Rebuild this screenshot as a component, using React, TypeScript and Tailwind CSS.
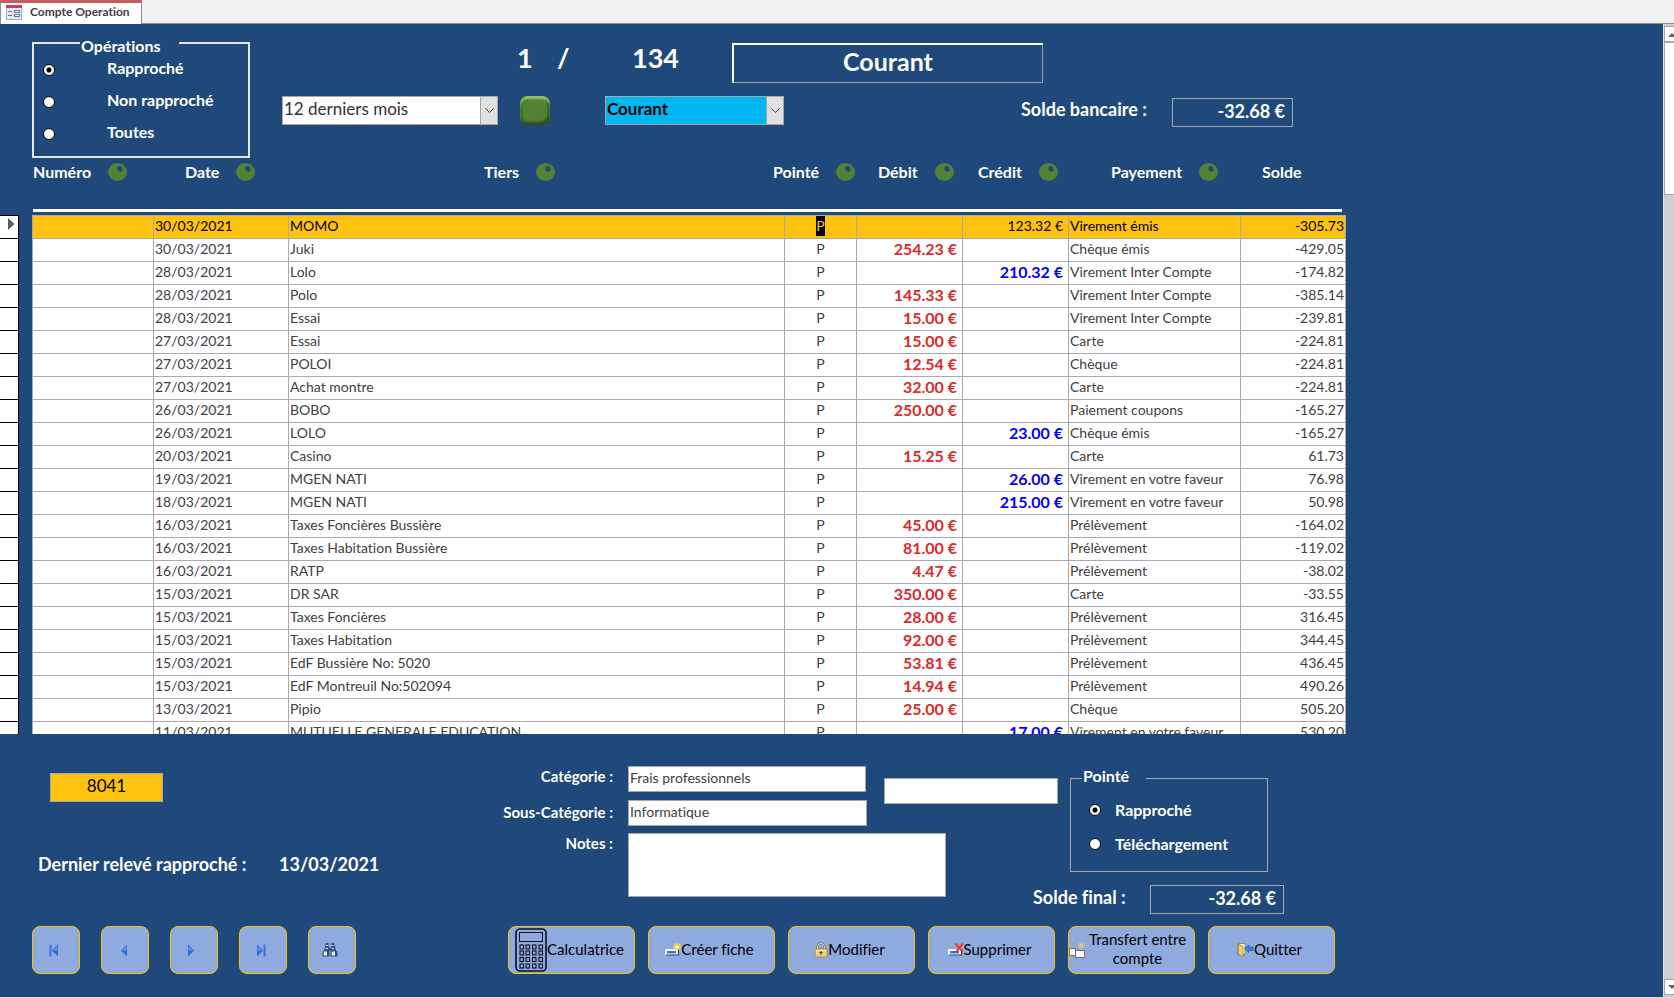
import type { ReactNode } from "react";

type Operation = {
  date: string;
  tiers: string;
  debit?: string;
  credit?: string;
  payement: string;
  solde: string;
};

const operations: Operation[] = [
  { date: "30/03/2021", tiers: "MOMO", credit: "123.32 €", payement: "Virement émis", solde: "-305.73" },
  { date: "30/03/2021", tiers: "Juki", debit: "254.23 €", payement: "Chèque émis", solde: "-429.05" },
  { date: "28/03/2021", tiers: "Lolo", credit: "210.32 €", payement: "Virement Inter Compte", solde: "-174.82" },
  { date: "28/03/2021", tiers: "Polo", debit: "145.33 €", payement: "Virement Inter Compte", solde: "-385.14" },
  { date: "28/03/2021", tiers: "Essai", debit: "15.00 €", payement: "Virement Inter Compte", solde: "-239.81" },
  { date: "27/03/2021", tiers: "Essai", debit: "15.00 €", payement: "Carte", solde: "-224.81" },
  { date: "27/03/2021", tiers: "POLOI", debit: "12.54 €", payement: "Chèque", solde: "-224.81" },
  { date: "27/03/2021", tiers: "Achat montre", debit: "32.00 €", payement: "Carte", solde: "-224.81" },
  { date: "26/03/2021", tiers: "BOBO", debit: "250.00 €", payement: "Paiement coupons", solde: "-165.27" },
  { date: "26/03/2021", tiers: "LOLO", credit: "23.00 €", payement: "Chèque émis", solde: "-165.27" },
  { date: "20/03/2021", tiers: "Casino", debit: "15.25 €", payement: "Carte", solde: "61.73" },
  { date: "19/03/2021", tiers: "MGEN NATI", credit: "26.00 €", payement: "Virement en votre faveur", solde: "76.98" },
  { date: "18/03/2021", tiers: "MGEN NATI", credit: "215.00 €", payement: "Virement en votre faveur", solde: "50.98" },
  { date: "16/03/2021", tiers: "Taxes Foncières Bussière", debit: "45.00 €", payement: "Prélèvement", solde: "-164.02" },
  { date: "16/03/2021", tiers: "Taxes Habitation Bussière", debit: "81.00 €", payement: "Prélèvement", solde: "-119.02" },
  { date: "16/03/2021", tiers: "RATP", debit: "4.47 €", payement: "Prélèvement", solde: "-38.02" },
  { date: "15/03/2021", tiers: "DR SAR", debit: "350.00 €", payement: "Carte", solde: "-33.55" },
  { date: "15/03/2021", tiers: "Taxes Foncières", debit: "28.00 €", payement: "Prélèvement", solde: "316.45" },
  { date: "15/03/2021", tiers: "Taxes Habitation", debit: "92.00 €", payement: "Prélèvement", solde: "344.45" },
  { date: "15/03/2021", tiers: "EdF Bussière No: 5020", debit: "53.81 €", payement: "Prélèvement", solde: "436.45" },
  { date: "15/03/2021", tiers: "EdF Montreuil No:502094", debit: "14.94 €", payement: "Prélèvement", solde: "490.26" },
  { date: "13/03/2021", tiers: "Pipio", debit: "25.00 €", payement: "Chèque", solde: "505.20" },
  { date: "11/03/2021", tiers: "MUTUELLE GENERALE EDUCATION", credit: "17.00 €", payement: "Virement en votre faveur", solde: "530.20" },
];

const sortLabels = ["Numéro", "Date", "Tiers", "Pointé", "Débit", "Crédit", "Payement"];

const FormIcon = () => (
  <svg width="16" height="15" viewBox="0 0 16 15" aria-hidden="true">
    <rect x="0.5" y="0.5" width="15" height="14" fill="#e4e9f5" stroke="#a3adc8" />
    <rect width="16" height="3" fill="#c9405c" />
    <path d="M2 6.500h4M2 10.500h4" stroke="#66739a" />
    <rect x="8.500" y="5.500" width="5" height="2" fill="#fff" stroke="#66739a" />
    <rect x="8.500" y="9.500" width="5" height="2" fill="#fff" stroke="#66739a" />
  </svg>
);

const CalculatorIcon = () => (
  <svg width="32" height="44" viewBox="0 0 32 44" fill="none" stroke="#0b1020" aria-hidden="true">
    <rect x="1" y="1" width="30" height="42" rx="4" strokeWidth="1.6" />
    <rect x="4.5" y="4.5" width="23" height="9" />
    {[17, 23, 29.5, 36].map((y) =>
      [5, 11, 17.5, 24].map((x) => <rect key={`${x}-${y}`} x={x} y={y} width="3.5" height="4" strokeWidth="1.1" />)
    )}
  </svg>
);

const RecordBar = () => (
  <>
    <rect x="0.5" y="7.5" width="12.500" height="5" fill="#fff" stroke="#f4f7ff" />
    <path d="M1 13h12.500V7" stroke="#27407c" strokeWidth="1.2" fill="none" />
    <rect x="2" y="9" width="9" height="2.5" fill="#3f74d8" />
  </>
);

const NewRecordIcon = () => (
  <svg width="16" height="16" viewBox="0 0 16 16" aria-hidden="true">
    <RecordBar />
    <path d="M12 1v8M8 5h8M9 2l6 6M15 2l-6 6" stroke="#f7d94c" strokeWidth="1.6" />
    <circle cx="12" cy="5" r="1.5" fill="#fff9c8" />
  </svg>
);

const DeleteRecordIcon = () => (
  <svg width="16" height="16" viewBox="0 0 16 16" aria-hidden="true">
    <RecordBar />
    <path d="M7.5 1.500l7.500 8.500M15 1.500L8 10" stroke="#f03a24" strokeWidth="2" />
  </svg>
);

const LockIcon = () => (
  <svg width="14" height="16" viewBox="0 0 14 16" aria-hidden="true">
    <path d="M3.500 8V5a3.500 3.500 0 0 1 7 0V8" fill="none" stroke="#77736a" strokeWidth="2.4" />
    <path d="M3.500 8V5a3.500 3.500 0 0 1 7 0V8" fill="none" stroke="#e6e2d6" strokeWidth="1" />
    <rect x="1" y="7" width="12" height="8" rx="1" fill="#f0cf82" stroke="#a9822e" strokeWidth="0.8" />
    <path d="M2 8.500h10" stroke="#fdf0c8" />
    <path d="M7 9v4M5.500 10.500h3" stroke="#4a3814" />
  </svg>
);

const TransferIcon = () => (
  <svg width="16" height="16" viewBox="0 0 16 16" aria-hidden="true">
    <path d="M12.500 0v7M9 3.500h7M10 1l5 5M15 1l-5 5" stroke="#f0c67c" />
    <rect x="0.5" y="6.500" width="6" height="7" fill="#fff" stroke="#707070" />
    <rect x="6.500" y="8.500" width="9" height="7" fill="#fff" stroke="#707070" />
  </svg>
);

const ExitIcon = () => (
  <svg width="17" height="16" viewBox="0 0 17 16" aria-hidden="true">
    <path d="M1 1.500h7v11H1z" fill="#fff8d0" stroke="#8d7a45" strokeWidth="0.8" />
    <path d="M1.500 2L6 4.500V15L1.500 12z" fill="#f3cf6c" stroke="#9a7b2e" strokeWidth="0.7" />
    <path d="M8 6.500L11.500 3v2H16v3.500h-4.500v2z" fill="#3f7bea" stroke="#1d4fb0" strokeWidth="0.6" />
  </svg>
);

const BinocularsIcon = () => (
  <svg width="16" height="14" viewBox="0 0 16 14" aria-hidden="true">
    <path d="M4 0h2.500v3L7.500 5v8.500H0.500V9L2 7.500z" fill="#33507f" />
    <path d="M9.500 0H12l2 7.500L15.500 9v4.500h-7V5l1-2z" fill="#33507f" />
    <rect x="1.800" y="8.500" width="3.200" height="4" fill="#eef3fc" />
    <rect x="9.800" y="8.500" width="3.200" height="4" fill="#eef3fc" />
    <path d="M4 2.500h2M9.800 2.500h1.800M3.500 5.500H6M9.800 5.500h2.200" stroke="#dbe6f8" />
    <rect x="7" y="5.500" width="2" height="2" fill="#33507f" />
  </svg>
);

const Triangle = ({ dir, bar }: { dir: "left" | "right"; bar?: boolean }) => (
  <svg width="10" height="13" viewBox="0 0 10 13" aria-hidden="true" className={dir === "right" ? "-scale-x-100" : ""}>
    <path d="M9 0.500v12L3 6.500z" fill="#2f68e0" />
    <path d="M8.500 2v4.500H4z" fill="#5f92f5" />
    {bar && <rect x="0.500" y="0.500" width="2" height="12" fill="#3a70de" />}
  </svg>
);

const navButtons: { label: string; icon: ReactNode }[] = [
  { label: "Premier", icon: <Triangle dir="left" bar /> },
  { label: "Précédent", icon: <Triangle dir="left" /> },
  { label: "Suivant", icon: <Triangle dir="right" /> },
  { label: "Dernier", icon: <Triangle dir="right" bar /> },
  { label: "Rechercher", icon: <BinocularsIcon /> },
];

const actionButtons: { label: string; icon: ReactNode }[] = [
  { label: "Calculatrice", icon: <CalculatorIcon /> },
  { label: "Créer fiche", icon: <NewRecordIcon /> },
  { label: "Modifier", icon: <LockIcon /> },
  { label: "Supprimer", icon: <DeleteRecordIcon /> },
  { label: "Transfert entre compte", icon: <TransferIcon /> },
  { label: "Quitter", icon: <ExitIcon /> },
];

const Radio = ({ name, label, checked }: { name: string; label: string; checked?: boolean }) => (
  <input
    type="radio"
    name={name}
    aria-label={label}
    defaultChecked={checked}
    className="size-3 shrink-0 appearance-none rounded-full border border-black bg-white checked:bg-[radial-gradient(circle,#000_2px,#fff_3px)]"
  />
);

const DropDown = ({ label, value, className }: { label: string; value: string; className: string }) => (
  <div className="relative">
    <select
      aria-label={label}
      defaultValue={value}
      className={`h-[29px] appearance-none border border-[#a6a6a6] pb-1 pl-px text-[17px] ${className}`}
    >
      <option>{value}</option>
    </select>
    <span className="pointer-events-none absolute top-px right-px flex h-[27px] w-[17px] items-center justify-center border-l border-[#a6a6a6] bg-[#e1e1e1]">
      <svg width="9" height="6" viewBox="0 0 9 6" fill="none" stroke="#444" aria-hidden="true">
        <path d="M0.500 0.500l4 4 4-4" />
      </svg>
    </span>
  </div>
);

const SortDot = ({ label }: { label: string }) => (
  <button type="button" aria-label={`Trier par ${label}`}>
    <svg width="19" height="18" viewBox="0 0 19 18" aria-hidden="true">
      <ellipse cx="9.500" cy="9" rx="9.500" ry="9" fill="#548235" />
      <ellipse cx="12" cy="6" rx="2.500" ry="3" fill="#1f497b" transform="rotate(-30 12 6)" />
    </svg>
  </button>
);

const Header = () => (
  <header>
    <div className="flex items-start pl-8">
      <fieldset className="mt-[5px] h-[129px] w-[218px] border-2 border-[#e6e6e6] text-[16px] font-bold">
        <legend className="ml-[46px] w-[99px] pt-[7px] pb-px pl-px leading-5">Opérations</legend>
        <div className="flex flex-col gap-2 pt-px pl-[9px]">
          <label className="flex h-6 items-center gap-[52px]">
            <Radio name="operations" label="Rapproché" checked />
            <span className="pb-1">Rapproché</span>
          </label>
          <label className="flex h-6 items-center gap-[52px]">
            <Radio name="operations" label="Non rapproché" />
            <span className="pb-1">Non rapproché</span>
          </label>
          <label className="flex h-6 items-center gap-[52px]">
            <Radio name="operations" label="Toutes" />
            <span className="pb-1">Toutes</span>
          </label>
        </div>
      </fieldset>

      <div className="ml-8 pt-4">
        <div className="flex items-start pl-[235px] text-[27px] leading-9 font-bold">
          <span className="w-10">1</span>
          <span className="w-[75px]">/</span>
          <span className="w-[100px]">134</span>
          <h1 className="mt-[3px] h-10 w-[311px] border-t-2 border-r border-b border-l-2 border-t-white border-r-[#a0a0a0] border-b-[#a0a0a0] border-l-white text-center text-[25px] leading-8">
            Courant
          </h1>
        </div>
        <div className="mt-[13px] flex items-start text-[18px] leading-6 font-bold">
          <DropDown label="Période" value="12 derniers mois" className="w-[216px] bg-white font-normal text-[#333]" />
          <button
            type="button"
            aria-label="Actualiser"
            className="ml-[22px] h-[29px] w-[30px] rounded-lg bg-[#548235] shadow-[inset_0_3px_2px_#8fc46a,inset_-2px_-3px_3px_#2c4a16,inset_2px_0_3px_#3a611f]"
          />
          <div className="ml-[55px]">
            <DropDown label="Compte" value="Courant" className="w-[179px] bg-[#00b7f1] font-bold text-black" />
          </div>
          <span className="ml-[237px] w-[151px] pt-px">Solde bancaire :</span>
          <output className="mt-0.5 h-[29px] w-[121px] border border-[#a6a6a6] pr-[7px] text-right">-32.68 €</output>
        </div>
      </div>
    </div>

    <div className="mt-1 grid grid-cols-[152px_299px_289px_105px_100px_133px_151px_80px] pl-[33px] text-[16px] leading-5 font-bold">
      {sortLabels.map((label) => (
        <div key={label} className="flex items-center gap-[17px]">
          {label}
          <SortDot label={label} />
        </div>
      ))}
      <div>Solde</div>
    </div>
    <div className="mt-[27px] mb-[3px] ml-[33px] h-[3px] w-[1309px] bg-white" />
  </header>
);

const OperationTable = () => (
  <div className="flex min-h-0 flex-1 items-start gap-[13px] overflow-hidden">
    <div className="w-[19px] shrink-0 border-t border-r border-black bg-white">
      {operations.map((_, i) => (
        <div key={i} className="h-[23px] border-b border-black pt-0.5 pl-2">
          {i === 0 && (
            <svg width="7" height="12" viewBox="0 0 7 12" aria-hidden="true">
              <path d="M0 0l6.500 6L0 12z" fill="#5c5c5c" />
            </svg>
          )}
        </div>
      ))}
    </div>

    <table className="w-[1314px] shrink-0 table-fixed border-separate border-spacing-0 border-t border-l border-[#a9a9b1] bg-white text-[14px] leading-5 text-[#404040]">
      <colgroup>
        <col className="w-[121px]" />
        <col className="w-[135px]" />
        <col className="w-[496px]" />
        <col className="w-[72px]" />
        <col className="w-[106px]" />
        <col className="w-[106px]" />
        <col className="w-[172px]" />
        <col className="w-[105px]" />
      </colgroup>
      <tbody className="[&_td]:h-[23px] [&_td]:border-r [&_td]:border-b [&_td]:border-[#a9a9b1] [&_td]:align-top [&_td]:whitespace-nowrap">
        {operations.map((op, i) => (
          <tr key={i} className={i === 0 ? "bg-[#ffc20e] text-black" : ""}>
            <td />
            <td className="pl-px">{op.date}</td>
            <td className="pl-px">{op.tiers}</td>
            <td className="text-center">
              {i === 0 ? <span className="inline-block bg-black text-[#ffc20e]">P</span> : "P"}
            </td>
            <td className="pr-[5px] text-right text-[16px] font-bold text-[#dc2a2a]">{op.debit}</td>
            <td className={i === 0 ? "pr-[5px] text-right" : "pr-[5px] text-right text-[16px] font-bold text-[#0000ff]"}>
              {op.credit}
            </td>
            <td className="pl-px">{op.payement}</td>
            <td className="pr-px text-right">{op.solde}</td>
          </tr>
        ))}
      </tbody>
    </table>
  </div>
);

const Footer = () => (
  <footer className="pt-8 pb-[23px]">
    <div className="flex items-start pl-[38px]">
      <div className="w-[465px] text-[18px] leading-6 font-bold">
        <output className="mt-[7px] ml-3 block h-[29px] w-[113px] border border-[#a6a6a6] bg-[#ffc20e] text-center text-[17px] font-normal text-black">
          8041
        </output>
        <div className="mt-[50px] flex">
          <span className="w-[241px]">Dernier relevé rapproché :</span>
          <span>13/03/2021</span>
        </div>
      </div>

      <div className="grid grid-cols-[125px_256px_149px_37px_214px] grid-rows-[34px_33px_52px_29px] text-[15px] leading-5">
        <label htmlFor="categorie" className="pr-[15px] text-right font-bold">
          Catégorie :
        </label>
        <input
          id="categorie"
          defaultValue="Frais professionnels"
          className="h-[26px] w-[238px] border border-[#a6a6a6] bg-white pb-1 pl-px text-[14px] text-[#404040]"
        />
        <input
          aria-label="Complément"
          className="col-span-2 row-span-2 mt-3 h-[26px] w-[174px] border border-[#a6a6a6] bg-white text-[14px] text-[#404040]"
        />
        <fieldset className="row-span-3 h-[106px] w-[198px] border border-[#a6a6a6] text-[16px] font-bold">
          <legend className="ml-[11px] w-16 pb-1 pl-px leading-5">Pointé</legend>
          <div className="flex flex-col gap-2.5 pt-2 pl-[18px]">
            <label className="flex h-6 items-center gap-[14px]">
              <Radio name="pointe" label="Rapproché" checked />
              Rapproché
            </label>
            <label className="flex h-6 items-center gap-[14px]">
              <Radio name="pointe" label="Téléchargement" />
              Téléchargement
            </label>
          </div>
        </fieldset>

        <label htmlFor="sous-categorie" className="col-start-1 row-start-2 pt-0.5 pr-[15px] text-right font-bold">
          Sous-Catégorie :
        </label>
        <input
          id="sous-categorie"
          defaultValue="Informatique"
          className="h-[26px] w-[239px] border border-[#a6a6a6] bg-white pb-1 pl-px text-[14px] text-[#404040]"
        />

        <label htmlFor="notes" className="col-start-1 row-start-3 pr-[15px] text-right font-bold">
          Notes :
        </label>
        <textarea
          id="notes"
          className="col-span-2 row-span-2 h-16 w-[318px] resize-none border border-[#a6a6a6] bg-white text-[14px] text-[#404040]"
        />
        <div className="col-span-2 col-start-4 row-start-4 flex text-[18px] leading-6 font-bold">
          <span className="w-[117px]">Solde final :</span>
          <output className="h-[29px] w-[134px] border border-[#a6a6a6] pr-[7px] text-right">-32.68 €</output>
        </div>
      </div>
    </div>

    <div className="mt-3 flex pl-8">
      <div className="flex w-[476px] gap-[21px]">
        {navButtons.map(({ label, icon }) => (
          <button
            key={label}
            type="button"
            aria-label={label}
            className="flex size-12 items-center justify-center rounded-lg border border-[#ffc000] bg-[#8faadc] pr-1"
          >
            {icon}
          </button>
        ))}
      </div>
      <div className="flex gap-[13px] text-[15px] leading-[19px] text-black">
        {actionButtons.map(({ label, icon }) => (
          <button
            key={label}
            type="button"
            className="flex h-12 w-[127px] items-center justify-center rounded-lg border border-[#ffc000] bg-[#8faadc] pr-1"
          >
            <span className="shrink-0">{icon}</span>
            <span className="pb-0.5">{label}</span>
          </button>
        ))}
      </div>
    </div>
  </footer>
);

const ScrollBar = () => (
  <div className="flex w-[11px] shrink-0 flex-col overflow-hidden border-l border-[#e6e6e6] bg-[#d0d0d0]" aria-hidden="true">
    <div className="mt-0.5 flex h-4 w-4 shrink-0 items-center justify-center border border-[#a6a6a6] bg-white">
      <svg width="8" height="5" viewBox="0 0 8 5">
        <path d="M0 5l4-4 4 4z" fill="#606060" />
      </svg>
    </div>
    <div className="h-[153px] w-4 border border-[#a6a6a6] bg-white" />
    <div className="mt-auto mb-0.5 flex h-4 w-4 shrink-0 items-center justify-center border border-[#a6a6a6] bg-white">
      <svg width="8" height="5" viewBox="0 0 8 5">
        <path d="M0 0l4 4 4-4z" fill="#606060" />
      </svg>
    </div>
  </div>
);

const App = () => (
  <div className="flex h-screen flex-col overflow-hidden bg-[#1f497b] font-[Lato,sans-serif] text-white [font-variant-ligatures:none]">
    <nav className="flex h-6 shrink-0 border-b border-[#8c8c8c] bg-[#f3f1ef]">
      <a
        href="#"
        className="flex h-6 w-[142px] items-center gap-2 border-t-[3px] border-r border-l border-t-[#cd5a5a] border-r-[#8c8c8c] border-l-[#8c8c8c] bg-white pb-0.5 pl-[5px] text-[12px] leading-5 font-bold text-[#404040]"
      >
        <FormIcon />
        <span className="pb-0.5">Compte Operation</span>
      </a>
    </nav>
    <div className="flex min-h-0 flex-1 border-b border-[#cfe0f0]">
      <main className="flex min-w-0 flex-1 flex-col overflow-hidden">
        <Header />
        <OperationTable />
        <Footer />
      </main>
      <ScrollBar />
    </div>
  </div>
);

export default App;
